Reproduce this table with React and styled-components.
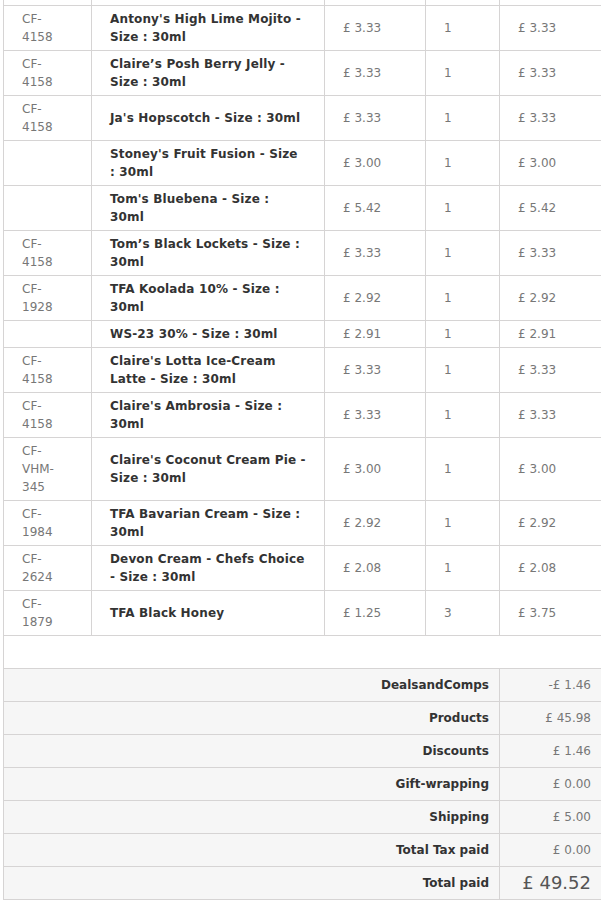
import React from 'react';
import styled, { createGlobalStyle } from 'styled-components';

const GlobalStyle = createGlobalStyle`
  body {
    margin: 0;
    background: #fff;
    font-family: 'DejaVu Sans', Verdana, sans-serif;
    font-size: 12px;
    color: #777;
  }
`;

const Wrapper = styled.div`
  padding-left: 3px;
  width: 598px;
`;

const Table = styled.table`
  width: 598px;
  table-layout: fixed;
  border-collapse: collapse;
  border: 1px solid #d6d4d4;
  border-top: none;
`;

const Cell = styled.td`
  border: 1px solid #d6d4d4;
  padding: 4px 18px;
  line-height: 18px;
  vertical-align: middle;
  color: #777;
  word-wrap: break-word;
`;

const NameCell = styled(Cell)`
  font-weight: bold;
  color: #333;
  letter-spacing: 0.15px;
`;

const StubCell = styled.td`
  border: 1px solid #d6d4d4;
  border-top: none;
  height: 5px;
  padding: 0;
`;

const EmptyCell = styled.td`
  border: 1px solid #d6d4d4;
  height: 32px;
  padding: 0;
  background: #fff;
`;

const SumRow = styled.tr`
  background: #f6f6f6;
`;

const SumLabel = styled.td`
  border: 1px solid #d6d4d4;
  padding: 7px 10px 7px 18px;
  line-height: 18px;
  text-align: right;
  font-weight: bold;
  color: #333;
`;

const SumValue = styled.td`
  border: 1px solid #d6d4d4;
  padding: 7px 10px 7px 8px;
  line-height: 18px;
  text-align: right;
  color: ${p => (p.$big ? '#555' : '#777')};
  font-size: ${p => (p.$big ? '18px' : '12px')};
`;

const items = [
  ['CF-\n4158', "Antony's High Lime Mojito - Size : 30ml", '3.33', 1, '3.33'],
  ['CF-\n4158', 'Claire’s Posh Berry Jelly - Size : 30ml', '3.33', 1, '3.33'],
  ['CF-\n4158', "Ja's Hopscotch - Size : 30ml", '3.33', 1, '3.33'],
  ['', "Stoney's Fruit Fusion - Size : 30ml", '3.00', 1, '3.00'],
  ['', "Tom's Bluebena - Size : 30ml", '5.42', 1, '5.42'],
  ['CF-\n4158', 'Tom’s Black Lockets - Size : 30ml', '3.33', 1, '3.33'],
  ['CF-\n1928', 'TFA Koolada 10% - Size : 30ml', '2.92', 1, '2.92'],
  ['', 'WS-23 30% - Size : 30ml', '2.91', 1, '2.91'],
  ['CF-\n4158', "Claire's Lotta Ice-Cream Latte - Size : 30ml", '3.33', 1, '3.33'],
  ['CF-\n4158', "Claire's Ambrosia - Size : 30ml", '3.33', 1, '3.33'],
  ['CF-\nVHM-\n345', "Claire's Coconut Cream Pie - Size : 30ml", '3.00', 1, '3.00'],
  ['CF-\n1984', 'TFA Bavarian Cream - Size : 30ml', '2.92', 1, '2.92'],
  ['CF-\n2624', 'Devon Cream - Chefs Choice - Size : 30ml', '2.08', 1, '2.08'],
  ['CF-\n1879', 'TFA Black Honey', '1.25', 3, '3.75'],
];

const totals = [
  ['DealsandComps', '-£ 1.46'],
  ['Products', '£ 45.98'],
  ['Discounts', '£ 1.46'],
  ['Gift-wrapping', '£ 0.00'],
  ['Shipping', '£ 5.00'],
  ['Total Tax paid', '£ 0.00'],
  ['Total paid', '£ 49.52', true],
];

const Ref = ({ code }) =>
  code.split('\n').map((part, i) => (
    <React.Fragment key={i}>
      {i > 0 && <br />}
      {part}
    </React.Fragment>
  ));

export default function App() {
  return (
    <>
      <GlobalStyle />
      <Wrapper>
        <Table>
          <colgroup>
            <col style={{ width: 88 }} />
            <col style={{ width: 233 }} />
            <col style={{ width: 101 }} />
            <col style={{ width: 74 }} />
            <col style={{ width: 102 }} />
          </colgroup>
          <tbody>
            <tr>
              <StubCell />
              <StubCell />
              <StubCell />
              <StubCell />
              <StubCell />
            </tr>
            {items.map(([code, name, price, qty, total], i) => (
              <tr key={i}>
                <Cell>
                  <Ref code={code} />
                </Cell>
                <NameCell>{name}</NameCell>
                <Cell>£ {price}</Cell>
                <Cell>{qty}</Cell>
                <Cell>£ {total}</Cell>
              </tr>
            ))}
            <tr>
              <EmptyCell colSpan={5} />
            </tr>
            {totals.map(([label, value, big]) => (
              <SumRow key={label}>
                <SumLabel colSpan={4}>{label}</SumLabel>
                <SumValue $big={big}>{value}</SumValue>
              </SumRow>
            ))}
          </tbody>
        </Table>
      </Wrapper>
    </>
  );
}
